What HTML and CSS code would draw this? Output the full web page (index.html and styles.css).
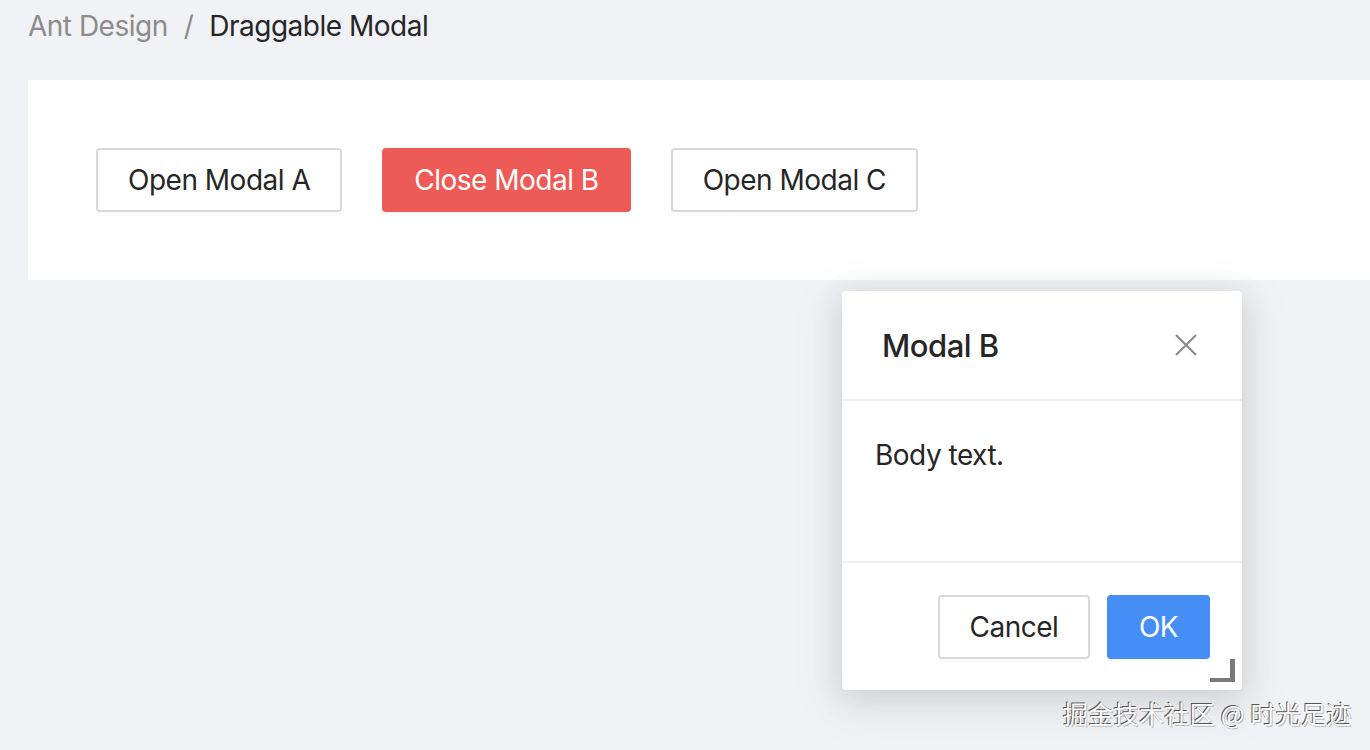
FILE: index.html
```html
<!DOCTYPE html>
<html lang="en">
<head>
<meta charset="utf-8">
<title>Draggable Modal</title>
<link rel="stylesheet" href="styles.css">
</head>
<body>
<div class="page">
  <nav class="breadcrumb">
    <span class="crumb-link">Ant Design</span>
    <span class="crumb-sep">/</span>
    <span class="crumb-current">Draggable Modal</span>
  </nav>
  <section class="card">
    <button class="btn">Open Modal A</button>
    <button class="btn btn-danger">Close Modal B</button>
    <button class="btn">Open Modal C</button>
  </section>

  <div class="modal">
    <div class="modal-header">
      <div class="modal-title">Modal B</div>
      <span class="modal-close" aria-label="Close">
        <svg width="24" height="24" viewBox="0 0 24 24"><path d="M2 2 L22 22 M22 2 L2 22" stroke="#8c8c8c" stroke-width="2.2" fill="none"/></svg>
      </span>
    </div>
    <div class="modal-body">Body text.</div>
    <div class="modal-footer">
      <button class="btn btn-cancel">Cancel</button>
      <button class="btn btn-primary">OK</button>
    </div>
    <span class="resize-handle"></span>
  </div>

  <div class="watermark">掘金技术社区 @ 时光足迹</div>
</div>
</body>
</html>
```
FILE: styles.css
```css
html, body {
  margin: 0;
  padding: 0;
}
body {
  background: #f0f2f5;
  font-family: Inter, "Noto Sans", "Noto Sans CJK SC", sans-serif;
  color: #262626;
  width: 1370px;
  height: 750px;
  overflow: hidden;
  letter-spacing: -0.5px;
}
.page {
  position: relative;
  width: 1370px;
  height: 750px;
}
.breadcrumb {
  display: flex;
  align-items: center;
  padding: 6px 0 0 28px;
  height: 40px;
  font-size: 28px;
  line-height: 40px;
}
.crumb-link {
  color: #8c8c8c;
}
.crumb-sep {
  color: #8c8c8c;
  margin: 0 16px;
}
.crumb-current {
  color: #262626;
}
.card {
  margin: 34px 0 0 28px;
  height: 200px;
  box-sizing: border-box;
  padding: 68px 0 0 68px;
  background: #fff;
  display: flex;
  align-items: flex-start;
  gap: 40px;
}
.btn {
  font-family: inherit;
  font-size: 28px;
  letter-spacing: -0.5px;
  height: 64px;
  padding: 0 30px;
  border: 2px solid #d9d9d9;
  border-radius: 4px;
  background: #fff;
  color: #262626;
  box-shadow: 0 4px 0 rgba(0, 0, 0, 0.015);
  cursor: pointer;
  line-height: 1;
}
.btn-danger {
  background: #ee5b56;
  border-color: #ee5b56;
  color: #fff;
}
.modal {
  position: absolute;
  left: 842px;
  top: 291px;
  width: 400px;
  height: 399px;
  background: #fff;
  border-radius: 4px;
  box-shadow: 0 6px 32px rgba(0, 0, 0, 0.12), 0 12px 48px 16px rgba(0, 0, 0, 0.04);
  display: flex;
  flex-direction: column;
}
.modal-header {
  height: 110px;
  flex: none;
  box-sizing: border-box;
  padding: 0 44px 0 40px;
  border-bottom: 2px solid #f0f0f0;
  display: flex;
  align-items: center;
  justify-content: space-between;
}
.modal-title {
  font-size: 31px;
  font-weight: 500;
  color: #262626;
}
.modal-close {
  display: flex;
  width: 24px;
  height: 24px;
}
.modal-body {
  height: 162px;
  flex: none;
  box-sizing: border-box;
  padding: 34px 32px 0 33px;
  font-size: 28px;
  line-height: 40px;
  border-bottom: 2px solid #f0f0f0;
}
.modal-footer {
  flex: 1;
  display: flex;
  justify-content: flex-end;
  align-items: flex-start;
  gap: 17px;
  padding: 32px 32px 0 0;
}
.btn-cancel {
  width: 152px;
  padding: 0;
}
.btn-primary {
  width: 103px;
  padding: 0;
  background: #448ef6;
  border-color: #448ef6;
  color: #fff;
}
.resize-handle {
  position: absolute;
  left: 368px;
  top: 368px;
  width: 20px;
  height: 19px;
  border-right: 5px solid #7a7a7a;
  border-bottom: 4px solid #7a7a7a;
}
.watermark {
  position: absolute;
  left: 1063px;
  top: 695px;
  font-family: "Noto Sans CJK SC", sans-serif;
  font-size: 25px;
  line-height: 36px;
  color: #fdfdfd;
  letter-spacing: 0.3px;
  text-shadow: -1px -1px 0 #555, 1px 1px 0 #bbb;
  white-space: nowrap;
}
```
